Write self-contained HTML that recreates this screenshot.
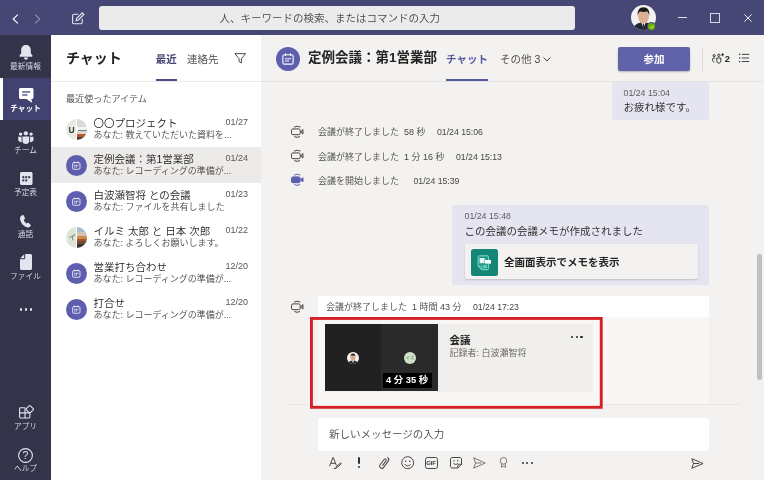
<!DOCTYPE html>
<html lang="ja">
<head>
<meta charset="utf-8">
<title>Microsoft Teams</title>
<style>
*{box-sizing:border-box;margin:0;padding:0}
html,body{width:764px;height:480px;overflow:hidden;background:#f3f2f1}
body{font-family:"Liberation Sans","Noto Sans CJK JP",sans-serif;color:#252423;position:relative;font-size:12px;font-weight:350}
.abs{position:absolute}
#titlebar,#rail,#list,#main{will-change:transform}
.nw{white-space:nowrap}
svg{display:block;overflow:visible}
/* title bar */
#titlebar{left:0;top:0;width:764px;height:35px;background:#464775}
#search{left:99px;top:6px;width:476px;height:24px;background:#ebebeb;border-radius:3px;color:#484644;font-size:10.5px;line-height:24px;text-align:left;padding-left:120.5px}
/* rail */
#rail{left:0;top:36px;width:51px;height:444px;background:#33344a;box-shadow:0 -1px 0 #33344a}
.ri{left:0;width:51px;height:42px;color:#d9d9e3;text-align:center}
.ri .lb{position:absolute;left:0;width:51px;top:25.5px;font-size:7.7px;line-height:10px;color:#dedee8;white-space:nowrap}
.ri svg{position:absolute}
#ri-chat{background:#414270}
#ri-chat:before{content:"";position:absolute;left:0;top:0;width:3px;height:42px;background:#fff}
/* list */
#list{z-index:2;left:51px;top:36px;width:210px;height:444px;background:#fff;box-shadow:0 -1px 0 #fff}
.li{left:0;width:210px;height:36px}
.li.sel{background:#edebe9}
.li .av{position:absolute;left:15.2px;top:8px;width:21px;height:21px;border-radius:50%;background:#5d5fae;overflow:hidden}
.li .t{position:absolute;left:42.5px;top:5.2px;font-size:10.5px;line-height:15px;color:#252423;white-space:nowrap}
.li .s{position:absolute;left:42.5px;top:18px;font-size:9px;line-height:13px;color:#484644;white-space:nowrap}
.li .d{position:absolute;right:13px;top:5px;font-size:9px;line-height:12px;color:#5a5856}
/* main */
#main{left:260px;top:36px;width:504px;height:444px;background:#f3f2f1}
.sys{font-size:9px;line-height:12px;color:#484644;white-space:nowrap}
.st{font-size:8.7px}
.bub{background:#e5e5f1;border-radius:2px}
.ts{font-size:8.8px;line-height:10px;color:#605e5c;white-space:nowrap}
.msg{font-size:10.5px;line-height:14px;color:#252423;white-space:nowrap}
</style>
</head>
<body>
<div id="titlebar" class="abs">
  <svg class="abs" style="left:11.500px;top:13.500px" width="7" height="10" viewBox="0 0 7 10"><path d="M5.800.6L1.200 5l4.600 4.400" fill="none" stroke="#fff" stroke-width="1.150"/></svg>
  <svg class="abs" style="left:33.500px;top:13.500px" width="7" height="10" viewBox="0 0 7 10"><path d="M1.200.6L5.800 5 1.200 9.400" fill="none" stroke="#8f90b3" stroke-width="1.150"/></svg>
  <svg class="abs" style="left:72px;top:12px" width="13" height="12.500" viewBox="0 0 13 12.500"><g fill="none" stroke="#e6e6f0" stroke-width="1.100"><path d="M6.200 2.200H2c-.8 0-1.400.6-1.400 1.400v6.800c0 .8.600 1.400 1.400 1.400h6.800c.8 0 1.400-.6 1.400-1.400V6.800"/><path d="M10.300.8l1.600 1.600-5.600 5.600-2.200.6.600-2.200z"/></g></svg>
  <div id="search" class="abs nw">人、キーワードの検索、またはコマンドの入力</div>
  <!-- user avatar -->
  <svg class="abs" style="left:631px;top:5px" width="25" height="25" viewBox="0 0 25 25"><defs><clipPath id="avc"><circle cx="12.500" cy="12.500" r="12.500"/></clipPath></defs><g clip-path="url(#avc)"><rect width="25" height="25" fill="#f4f2f1"/><path d="M2.500 25c0-5 3.500-7.500 10-7.500s10 2.500 10 7.500z" fill="#23262f"/><path d="M10.300 17.500l2.200 5.500 2.200-5.500z" fill="#eef0f4"/><path d="M12 18.500h1l.5 6.500h-2z" fill="#2c3350"/><ellipse cx="12.500" cy="11.800" rx="5.400" ry="6.500" fill="#dcae92"/><path d="M6.800 11c-.8-5.500 1.700-8.700 5.700-8.700s6.500 3.200 5.700 8.700c-.4-2.600-1.300-3.900-2.200-4.400-2.200.6-4.800.6-7 0-.9.500-1.800 1.800-2.200 4.400z" fill="#1c1a1a"/></g></svg>
  <div class="abs" style="left:647px;top:22.300px;width:9px;height:9px;border-radius:50%;background:#464775"></div>
  <div class="abs" style="left:648px;top:23.300px;width:7px;height:7px;border-radius:50%;background:#6bb700"></div>
  <svg class="abs" style="left:649.500px;top:25px" width="4" height="4" viewBox="0 0 4 4"><path d="M.5 2.100l1 1L3.500.9" fill="none" stroke="#fff" stroke-width=".8"/></svg>
  <!-- window controls -->
  <div class="abs" style="left:677.500px;top:17px;width:9.500px;height:1px;background:#e0e0ec"></div>
  <div class="abs" style="left:710px;top:13px;width:10px;height:10px;border:1px solid #d6d6e6"></div>
  <svg class="abs" style="left:744px;top:14px" width="8" height="8" viewBox="0 0 8 8"><path d="M.3.300l7.400 7.400M7.700.3L.3 7.700" fill="none" stroke="#e6e6f0" stroke-width="1"/></svg>
</div>
<div id="rail" class="abs">
  <div class="ri abs" style="top:0">
    <svg style="left:19px;top:8.600px" width="14" height="15" viewBox="0 0 14 15"><path fill="#e4e4ee" d="M7 0C4.1 0 2.2 2.1 2.2 5v3.2L.6 10.6c-.3.5 0 1.1.6 1.1h11.6c.6 0 .9-.6.6-1.1l-1.6-2.4V5C11.800 2.100 9.900 0 7 0z"/><path fill="#e4e4ee" d="M4.900 12.600h4.200c0 1.200-.9 2.200-2.100 2.200s-2.100-1-2.100-2.200z"/></svg>
    <div class="lb">最新情報</div></div>
  <div class="ri abs" id="ri-chat" style="top:42px">
    <svg style="left:18.500px;top:9.500px" width="14.500" height="14.500" viewBox="0 0 14.500 14.500"><path fill="#fff" d="M1.500 0h11.500c.8 0 1.500.7 1.500 1.500v8c0 .8-.7 1.500-1.500 1.500H12.300l.9 3.200c.1.300-.2.500-.5.300L7.400 11H1.500C.7 11 0 10.300 0 9.500v-8C0 .7.700 0 1.500 0z"/><rect x="3.200" y="3.300" width="8" height="1.300" fill="#464775"/><rect x="3.200" y="6.300" width="5.200" height="1.300" fill="#464775"/></svg>
    <div class="lb" style="color:#fff;font-weight:bold">チャット</div></div>
  <div class="ri abs" style="top:84px">
    <svg style="left:17.800px;top:10.500px" width="15.700" height="13" viewBox="0 0 15.700 13"><g fill="#e4e4ee"><circle cx="7.850" cy="2.300" r="2.100"/><circle cx="2.600" cy="3.100" r="1.700"/><circle cx="13.100" cy="3.100" r="1.700"/><path d="M4.500 5.400h6.700v4.600c0 1.700-1.500 3-3.350 3S4.500 11.700 4.500 10z"/><path d="M.2 5.700h3.400v5.600C1.700 11.300.2 10.200.2 8.500z"/><path d="M12.100 5.700h3.400v2.800c0 1.700-1.500 2.800-3.400 2.800z"/></g></svg>
    <div class="lb">チーム</div></div>
  <div class="ri abs" style="top:126px">
    <svg style="left:19.500px;top:10.400px" width="12.500" height="13" viewBox="0 0 12.500 13"><path fill="#e4e4ee" d="M1.500 0h9.500c.8 0 1.500.7 1.500 1.500v10c0 .8-.7 1.500-1.500 1.500H1.500C.7 13 0 12.300 0 11.500v-10C0 .7.700 0 1.500 0z"/><g fill="#33344a"><rect x="2.300" y="4.200" width="2" height="2"/><rect x="5.250" y="4.200" width="2" height="2"/><rect x="8.200" y="4.200" width="2" height="2"/><rect x="2.300" y="7.400" width="2" height="2"/><rect x="5.250" y="7.400" width="2" height="2"/></g></svg>
    <div class="lb">予定表</div></div>
  <div class="ri abs" style="top:168px">
    <svg style="left:20.200px;top:11px" width="11" height="12.500" viewBox="0 0 11 12.500"><path fill="#e4e4ee" d="M2.700.1c.4-.2.900 0 1.100.4l1.100 2.400c.2.400.1.800-.2 1.100l-.9.900c.4 1.300 1.400 2.600 2.800 3.500l1.100-.6c.4-.2.800-.1 1.100.2l1.800 1.900c.3.300.3.800.1 1.100-.7 1-1.800 1.600-3.100 1.400C3.600 11.800.100 7.500 0 3.300 0 1.900 1.300.6 2.700.1z"/></svg>
    <div class="lb">通話</div></div>
  <div class="ri abs" style="top:210px">
    <svg style="left:20.200px;top:8px" width="12" height="16" viewBox="0 0 12 16"><path fill="#e4e4ee" d="M5.200 0H10.500c.8 0 1.500.7 1.500 1.500v13c0 .8-.7 1.500-1.500 1.500h-9C.7 16 0 15.300 0 14.500V5.200h3.700c.8 0 1.500-.7 1.500-1.500z"/><path fill="#e4e4ee" d="M4.200.3v3.200c0 .4-.3.700-.7.700H.3z"/></svg>
    <div class="lb">ファイル</div></div>
  <div class="abs" style="left:19.700px;top:272.300px;width:2.600px;height:2.600px;border-radius:50%;background:#e4e4ee"></div>
  <div class="abs" style="left:24.700px;top:272.300px;width:2.600px;height:2.600px;border-radius:50%;background:#e4e4ee"></div>
  <div class="abs" style="left:29.700px;top:272.300px;width:2.600px;height:2.600px;border-radius:50%;background:#e4e4ee"></div>
  <div class="ri abs" style="top:360px">
    <svg style="left:18.600px;top:9.300px" width="15" height="13.600" viewBox="0 0 15 13.600"><g fill="none" stroke="#e4e4ee" stroke-width="1.100"><path d="M6 2.700H1.500c-.5 0-.9.400-.9.900v8.500c0 .5.400.9.900.9H10c.5 0 .9-.4.900-.9V8"/><path d="M6 2.700V13M.6 7.900h10.300"/><path d="M11.300.8l2.900 2.900c.3.300.3.800 0 1.100L11.300 7.700c-.3.300-.8.300-1.100 0L7.300 4.800c-.3-.3-.3-.8 0-1.100L10.200.8c.3-.3.800-.3 1.100 0z"/></g></svg>
    <div class="lb" style="top:26px">アプリ</div></div>
  <div class="ri abs" style="top:401.500px">
    <svg style="left:18.300px;top:10.500px" width="15" height="15" viewBox="0 0 15 15"><circle cx="7.500" cy="7.500" r="6.900" fill="none" stroke="#e4e4ee" stroke-width="1.100"/><text x="7.500" y="11.200" text-anchor="middle" font-family="Liberation Sans,sans-serif" font-size="10.500" fill="#e4e4ee">?</text></svg>
    <div class="lb" style="top:26.500px">ヘルプ</div></div>
</div>
<div id="list" class="abs">
  <div class="abs nw" style="left:15px;top:12px;font-size:14px;line-height:20px;font-weight:bold;color:#252423">チャット</div>
  <div class="abs nw" style="left:104.800px;top:16px;font-size:10.500px;line-height:14px;color:#464775;font-weight:bold">最近</div>
  <div class="abs" style="left:105px;top:43px;width:21px;height:2px;background:#4b4d85"></div>
  <div class="abs nw" style="left:136px;top:16px;font-size:10.500px;line-height:14px;color:#484644">連絡先</div>
  <svg class="abs" style="left:183.200px;top:17.200px" width="12.500" height="11.200" viewBox="0 0 13 11.500"><path d="M.9.600h11.200L7.700 5.900v4.500L5.300 8.800V5.900z" fill="none" stroke="#484644" stroke-width="1" stroke-linejoin="round"/></svg>
  <div class="abs" style="left:0;top:45px;width:210px;height:1px;background:#edebe9"></div>
  <div class="abs nw" style="left:15px;top:57px;font-size:9.100px;line-height:12px;color:#484644">最近使ったアイテム</div>

  <div class="li abs" style="top:74.8px"><div class="av" style="background:#e6eae3"><div class="abs" style="left:10.500px;top:0;width:10.500px;height:21px;background:#d7dbd8"></div><div class="abs" style="left:10.500px;top:8.500px;width:10.500px;height:3.500px;background:#f4f4f2"></div><div class="abs" style="left:12px;top:11px;width:9px;height:1.200px;background:#5f7fa6"></div><div class="abs" style="left:10.500px;top:12.500px;width:10.500px;height:3px;background:#e6d6c8"></div><div class="abs" style="left:10.500px;top:15.500px;width:10.500px;height:3px;background:#b25a30"></div><div class="abs" style="left:10.500px;top:18.500px;width:10.500px;height:2.500px;background:#4a3a34"></div><div class="abs" style="left:10.200px;top:0;width:.8px;height:21px;background:#fff"></div><div class="abs nw" style="left:2.200px;top:6.200px;font-size:8.500px;line-height:10px;font-weight:bold;color:#3b3a39">U</div></div><div class="t">〇〇プロジェクト</div><div class="s">あなた: 教えていただいた資料を...</div><div class="d">01/27</div></div>
  <div class="li abs sel" style="top:110.8px"><div class="av"><svg style="position:absolute;left:6.200px;top:6.300px" width="8.600" height="9.200" viewBox="0 0 11 11"><g fill="none" stroke="#fff" stroke-width="1"><rect x=".8" y="1.600" width="9.400" height="8.600" rx="1.600"/><path d="M3.300.3v2.400M7.700.3v2.400"/></g><g fill="#fff"><rect x="3" y="4.500" width="1.300" height="1.300"/><rect x="4.900" y="4.500" width="1.300" height="1.300"/><rect x="6.800" y="4.500" width="1.300" height="1.300"/><rect x="3" y="6.600" width="1.300" height="1.300"/><rect x="4.900" y="6.600" width="1.300" height="1.300"/></g></svg></div><div class="t">定例会議：第1営業部</div><div class="s">あなた: レコーディングの準備が...</div><div class="d">01/24</div></div>
  <div class="li abs" style="top:146.8px"><div class="av"><svg style="position:absolute;left:6.200px;top:6.300px" width="8.600" height="9.200" viewBox="0 0 11 11"><g fill="none" stroke="#fff" stroke-width="1"><rect x=".8" y="1.600" width="9.400" height="8.600" rx="1.600"/><path d="M3.300.3v2.400M7.700.3v2.400"/></g><g fill="#fff"><rect x="3" y="4.500" width="1.300" height="1.300"/><rect x="4.900" y="4.500" width="1.300" height="1.300"/><rect x="6.800" y="4.500" width="1.300" height="1.300"/><rect x="3" y="6.600" width="1.300" height="1.300"/><rect x="4.900" y="6.600" width="1.300" height="1.300"/></g></svg></div><div class="t">白波瀬智将 との会議</div><div class="s">あなた: ファイルを共有しました</div><div class="d">01/23</div></div>
  <div class="li abs" style="top:182.8px"><div class="av" style="background:#dde4da"><div class="abs" style="left:10.500px;top:0;width:10.500px;height:21px;background:#a9b9c9"></div><div class="abs" style="left:10.500px;top:5px;width:10.500px;height:4px;background:#d2c4b4"></div><div class="abs" style="left:10.500px;top:9px;width:10.500px;height:3.500px;background:#d08a4a"></div><div class="abs" style="left:10.500px;top:12.500px;width:10.500px;height:2px;background:#a4552c"></div><div class="abs" style="left:10.500px;top:14.500px;width:10.500px;height:3px;background:#6e4a38"></div><div class="abs" style="left:10.500px;top:17.500px;width:10.500px;height:3.500px;background:#3f3432"></div><div class="abs" style="left:10.200px;top:0;width:.8px;height:21px;background:#fff"></div><div class="abs nw" style="left:2.300px;top:6px;font-size:7.800px;line-height:10px;color:#5a6658">イ</div></div><div class="t">イルミ 太郎 と 日本 次郎</div><div class="s">あなた: よろしくお願いします。</div><div class="d">01/22</div></div>
  <div class="li abs" style="top:218.8px"><div class="av"><svg style="position:absolute;left:6.200px;top:6.300px" width="8.600" height="9.200" viewBox="0 0 11 11"><g fill="none" stroke="#fff" stroke-width="1"><rect x=".8" y="1.600" width="9.400" height="8.600" rx="1.600"/><path d="M3.300.3v2.400M7.700.3v2.400"/></g><g fill="#fff"><rect x="3" y="4.500" width="1.300" height="1.300"/><rect x="4.900" y="4.500" width="1.300" height="1.300"/><rect x="6.800" y="4.500" width="1.300" height="1.300"/><rect x="3" y="6.600" width="1.300" height="1.300"/><rect x="4.900" y="6.600" width="1.300" height="1.300"/></g></svg></div><div class="t">営業打ち合わせ</div><div class="s">あなた: レコーディングの準備が...</div><div class="d">12/20</div></div>
  <div class="li abs" style="top:254.8px"><div class="av"><svg style="position:absolute;left:6.200px;top:6.300px" width="8.600" height="9.200" viewBox="0 0 11 11"><g fill="none" stroke="#fff" stroke-width="1"><rect x=".8" y="1.600" width="9.400" height="8.600" rx="1.600"/><path d="M3.300.3v2.400M7.700.3v2.400"/></g><g fill="#fff"><rect x="3" y="4.500" width="1.300" height="1.300"/><rect x="4.900" y="4.500" width="1.300" height="1.300"/><rect x="6.800" y="4.500" width="1.300" height="1.300"/><rect x="3" y="6.600" width="1.300" height="1.300"/><rect x="4.900" y="6.600" width="1.300" height="1.300"/></g></svg></div><div class="t">打合せ</div><div class="s">あなた: レコーディングの準備が...</div><div class="d">12/20</div></div>
</div>
<div id="main" class="abs">
  <!-- header -->
  <div class="abs" style="left:16px;top:10.5px;width:24px;height:24px;border-radius:50%;background:#5d5fae"></div>
  <div class="abs nw" style="left:48px;top:12px;font-size:13.5px;line-height:20px;font-weight:bold;color:#252423">定例会議：第1営業部</div>
  <div class="abs nw" style="left:186px;top:16px;font-size:10.5px;line-height:14px;font-weight:bold;color:#5558a0">チャット</div>
  <div class="abs" style="left:186px;top:42.500px;width:42px;height:2.300px;background:#565aa0"></div>
  <div class="abs nw" style="left:240px;top:16px;font-size:10.5px;line-height:14px;color:#484644">その他 3</div>
  <div class="abs" style="left:0;top:45px;width:504px;height:1px;background:#e6e4e2"></div>
  <div class="abs nw" style="left:358px;top:11px;width:72px;height:24px;background:#6063a9;border-radius:2px;color:#fff;font-weight:bold;font-size:10.5px;line-height:24px;text-align:center;box-shadow:0 1px 2px rgba(0,0,0,.25)">参加</div>
  <div class="abs" style="left:442px;top:11px;width:1px;height:24px;background:#dcdad8"></div>
  <div class="abs nw" style="left:464.700px;top:18.200px;font-size:9.300px;line-height:10px;font-weight:bold;color:#252423">2</div>

  <!-- first bubble -->
  <div class="abs bub" style="left:352px;top:46px;width:97px;height:38px"></div>
  <div class="abs ts" style="left:363.5px;top:52px">01/24 15:04</div>
  <div class="abs msg" style="left:363.5px;top:64px">お疲れ様です。</div>

  <!-- system rows -->
  <div class="abs sys" style="left:58px;top:90px">会議が終了しました&nbsp; 58 秒<span class="st" style="margin-left:11.500px">01/24 15:06</span></div>
  <div class="abs sys" style="left:58px;top:115px">会議が終了しました&nbsp; 1 分 16 秒<span class="st" style="margin-left:11.500px">01/24 15:13</span></div>
  <div class="abs sys" style="left:58px;top:139px">会議を開始しました<span class="st" style="margin-left:14.500px">01/24 15:39</span></div>

  <!-- memo bubble -->
  <div class="abs bub" style="left:192px;top:169px;width:257px;height:80px"></div>
  <div class="abs ts" style="left:204.5px;top:175px">01/24 15:48</div>
  <div class="abs msg" style="left:204.5px;top:188px">この会議の会議メモが作成されました</div>
  <div class="abs" style="left:204.5px;top:208px;width:233px;height:35px;background:#f3f2f1;border-radius:2px;box-shadow:0 1px 2px rgba(0,0,0,.18)"></div>
  <div class="abs" style="left:210.7px;top:212.600px;width:27px;height:27px;background:#158676;border-radius:2.500px"></div>
  <div class="abs msg" style="left:244px;top:219.300px;font-weight:bold">全画面表示でメモを表示</div>

  <!-- recording row -->
  <div class="abs" style="left:58px;top:260px;width:391px;height:21px;background:#fff"></div>
  <div class="abs" style="left:58px;top:281px;width:391px;height:87.500px;background:#f8f7f6"></div>
  <div class="abs sys" style="left:66px;top:265px">会議が終了しました&nbsp; 1 時間 43 分<span class="st" style="margin-left:11.500px">01/24 17:23</span></div>
  <div class="abs" style="left:65px;top:288px;width:268px;height:67.5px;background:#f0efed"></div>
  <div class="abs" style="left:65px;top:288.2px;width:113px;height:67.2px;background:#212121"></div>
  <div class="abs" style="left:121px;top:288.2px;width:57px;height:67.2px;background:#2a2a2a"></div>
  <svg class="abs" style="left:87.2px;top:316px" width="12" height="12" viewBox="0 0 25 25"><defs><clipPath id="avc2"><circle cx="12.5" cy="12.5" r="12.5"/></clipPath></defs><g clip-path="url(#avc2)"><rect width="25" height="25" fill="#f4f2f1"/><path d="M2.500 25c0-5 3.500-7.500 10-7.500s10 2.500 10 7.500z" fill="#23262f"/><path d="M10.300 17.500l2.200 5.500 2.200-5.500z" fill="#eef0f4"/><ellipse cx="12.500" cy="11.500" rx="5" ry="6.200" fill="#d9a789"/><path d="M7.300 10.500c-.6-4.800 1.700-7.300 5.200-7.300s5.800 2.500 5.200 7.300c-.4-2.300-1.300-3.400-2.100-3.800-2 .5-4.200.5-6.200 0-.8.400-1.700 1.500-2.100 3.800z" fill="#1c1a1a"/></g></svg>
  <div class="abs nw" style="left:143.800px;top:315.800px;width:12.400px;height:12.400px;border-radius:50%;background:#d3e0c8;font-size:4.500px;line-height:12.400px;text-align:center;color:#5c8a4e">イネ</div>
  <div class="abs nw" style="left:122.5px;top:337.3px;width:49.3px;height:14.3px;background:#000;color:#fff;font-weight:bold;font-size:9.4px;line-height:14.3px;text-align:center;letter-spacing:0">4 分 35 秒</div>
  <div class="abs nw" style="left:189.5px;top:296.800px;font-size:10.5px;line-height:14px;font-weight:bold;color:#252423">会議</div>
  <div class="abs nw" style="left:189.5px;top:311px;font-size:9px;line-height:12px;color:#605e5c">記録者: 白波瀬智将</div>
  <div class="abs" style="left:311.2px;top:299.6px;width:2.2px;height:2.2px;border-radius:50%;background:#252423"></div><div class="abs" style="left:315.8px;top:299.6px;width:2.2px;height:2.2px;border-radius:50%;background:#252423"></div><div class="abs" style="left:320.4px;top:299.6px;width:2.2px;height:2.2px;border-radius:50%;background:#252423"></div>
  <!-- red highlight -->
  

  <div class="abs" style="left:28px;top:368px;width:23px;height:1px;background:#e9e7e5"></div><div class="abs" style="left:342px;top:368px;width:139px;height:1px;background:#e9e7e5"></div><div class="abs" style="left:58px;top:368px;width:283px;height:3px;background:#f8f7f6"></div>
  <svg class="abs" style="left:50.400px;top:281px" width="292.700" height="91.750" viewBox="0 0 292.700 91.750"><rect x="1.450" y="1.450" width="289.800" height="88.850" fill="none" stroke="#d52027" stroke-width="2.900"/></svg>
  <!-- compose -->
  <div class="abs" style="left:58px;top:382px;width:391px;height:32.5px;background:#fff;border-radius:2px"></div>
  <div class="abs msg" style="left:69px;top:391px;color:#484644">新しいメッセージの入力</div>


  <!-- header icons -->
  <svg class="abs" style="left:22px;top:16.500px" width="12" height="12" viewBox="0 0 11 11"><g fill="none" stroke="#fff" stroke-width="1"><rect x=".8" y="1.600" width="9.400" height="8.600" rx="1.600"/><path d="M3.300.3v2.400M7.700.3v2.400"/></g><g fill="#fff"><rect x="3" y="4.500" width="1.300" height="1.300"/><rect x="4.900" y="4.500" width="1.300" height="1.300"/><rect x="6.800" y="4.500" width="1.300" height="1.300"/><rect x="3" y="6.600" width="1.300" height="1.300"/><rect x="4.900" y="6.600" width="1.300" height="1.300"/></g></svg>
  <svg class="abs" style="left:283px;top:21px" width="8" height="5" viewBox="0 0 8 5"><path d="M.5.500L4 4 7.500.5" fill="none" stroke="#484644" stroke-width="1"/></svg>
  <svg class="abs" style="left:451.500px;top:17px" width="13" height="11" viewBox="0 0 13 11"><g fill="none" stroke="#252423" stroke-width=".9"><circle cx="2.100" cy="2.700" r="1.100"/><circle cx="6.800" cy="2.300" r="1.200"/><path d="M3.300 5.200H1.300c-.4 0-.7.300-.7.700v1.300c0 1 .7 1.700 1.700 1.800"/><path d="M4.800 5h4v3.200c0 1.100-.9 1.900-2 1.900s-2-.8-2-1.900z"/><path d="M10.600.2v3M9.100 1.700h3"/></g></svg>
  <svg class="abs" style="left:478.500px;top:16.800px" width="10.400" height="9.500" viewBox="0 0 11 10"><g fill="#252423"><rect x="0" y=".7" width="1.300" height="1.300"/><rect x="0" y="4.600" width="1.300" height="1.300"/><rect x="0" y="8.400" width="1.300" height="1.300"/><rect x="3" y=".9" width="7.800" height=".9"/><rect x="3" y="4.800" width="7.800" height=".9"/><rect x="3" y="8.600" width="7.800" height=".9"/></g></svg>
  <!-- video icons -->
  <svg class="abs" style="left:31px;top:89.3px" width="13" height="14" viewBox="0 0 13 14"><rect x=".5" y="3.900" width="8.700" height="5.800" rx="1.500" fill="none" stroke="#484644" stroke-width="1"/><path d="M9.500 6.800L12 4.500v4.600z" fill="#a19f9d" stroke="#484644" stroke-width=".9" stroke-linejoin="round"/><path d="M3.100 2.100Q6.250.4 9.400 2.100M3.400 11.500Q6.200 13.200 9 11.500" fill="none" stroke="#484644" stroke-width="1"/></svg>
  <svg class="abs" style="left:31px;top:112.8px" width="13" height="14" viewBox="0 0 13 14"><rect x=".5" y="3.900" width="8.700" height="5.800" rx="1.500" fill="none" stroke="#484644" stroke-width="1"/><path d="M9.500 6.800L12 4.500v4.600z" fill="#a19f9d" stroke="#484644" stroke-width=".9" stroke-linejoin="round"/><path d="M3.100 2.100Q6.250.4 9.400 2.100M3.400 11.500Q6.200 13.200 9 11.500" fill="none" stroke="#484644" stroke-width="1"/></svg>
  <svg class="abs" style="left:31px;top:137.0px" width="13" height="14" viewBox="0 0 13 14"><rect x=".5" y="3.900" width="8.700" height="5.800" rx="1.500" fill="#5d5fae" stroke="#5d5fae" stroke-width="1"/><path d="M9.900 6.500L12 4.700v4.200L9.900 7.100z" fill="#5d5fae" stroke="#5d5fae" stroke-width="1" stroke-linejoin="round"/><path d="M3.100 2.100Q6.250.4 9.400 2.100M3.400 11.500Q6.200 13.200 9 11.500" fill="none" stroke="#5d5fae" stroke-width="1"/></svg>
  <svg class="abs" style="left:31px;top:264.0px" width="13" height="14" viewBox="0 0 13 14"><rect x=".5" y="3.900" width="8.700" height="5.800" rx="1.500" fill="none" stroke="#484644" stroke-width="1"/><path d="M9.500 6.800L12 4.500v4.600z" fill="#a19f9d" stroke="#484644" stroke-width=".9" stroke-linejoin="round"/><path d="M3.100 2.100Q6.250.4 9.400 2.100M3.400 11.500Q6.200 13.200 9 11.500" fill="none" stroke="#484644" stroke-width="1"/></svg>
  <!-- memo icon -->
  <svg class="abs" style="left:217px;top:218.600px" width="15" height="16" viewBox="0 0 15 16"><path d="M2.500.8h7.700c.8 0 1.400.6 1.400 1.400v11.200c0 .8-.6 1.400-1.400 1.400H4.800L1.100 11.300V2.200c0-.8.600-1.400 1.400-1.400z" fill="#1d9b8a" stroke="#8be3d3" stroke-width=".9"/><path d="M1.100 11.300h2.500c.7 0 1.200.5 1.200 1.200v2.300" fill="none" stroke="#8be3d3" stroke-width=".9"/><rect x="2.600" y="3" width="5" height="5.200" fill="#e6f7f3"/><rect x="8" y="5" width="6" height="3.600" fill="#fff"/><rect x="6" y="9.800" width="4" height="3.500" fill="#5cc9b6"/></svg>
  <!-- compose toolbar -->
  <svg class="abs" style="left:69px;top:421px" width="13" height="12" viewBox="0 0 13 12"><g fill="none" stroke="#484644" stroke-width="1"><path d="M.6 9.300L3.900.6h.4l3.100 8"/><path d="M1.800 6.300h4.400"/><path d="M11.800 5.800l.6.600-3.800 3.800-1.800.9.900-1.800z"/><path d="M4.800 11.300c1 .4 1.700.3 2.300-.2"/></g></svg>
  <div class="abs" style="left:97.800px;top:421.200px;width:2px;height:6.800px;background:#323130;border-radius:1px"></div>
  <div class="abs" style="left:97.700px;top:429.600px;width:2.200px;height:2.200px;background:#323130;border-radius:50%"></div>
  <svg class="abs" style="left:117.500px;top:420.500px" width="12" height="12" viewBox="0 0 12 12"><path d="M4.300 8.200l4-4c.5-.5.500-1.200 0-1.700s-1.200-.5-1.700 0L1.900 7.200c-.9.900-.9 2.200 0 3.100s2.200.9 3.100 0l5.300-5.300c1.200-1.200 1.200-2.800.1-3.900" fill="none" stroke="#484644" stroke-width="1" stroke-linecap="round" transform="rotate(-8 6 6)"/></svg>
  <svg class="abs" style="left:140.500px;top:419.800px" width="13.400" height="13.400" viewBox="0 0 13.400 13.400"><circle cx="6.700" cy="6.700" r="6" fill="none" stroke="#484644" stroke-width="1"/><circle cx="4.600" cy="5.200" r=".8" fill="#484644"/><circle cx="8.800" cy="5.200" r=".8" fill="#484644"/><path d="M3.800 8.200c.8 1.200 1.800 1.700 2.900 1.700s2.100-.5 2.900-1.700" fill="none" stroke="#484644" stroke-width="1"/></svg>
  <div class="abs nw" style="left:164.500px;top:420.500px;width:13px;height:12px;border:1px solid #484644;border-radius:2.500px;font-size:6px;line-height:10px;font-weight:bold;color:#3b3a39;text-align:center;letter-spacing:-.1px">GIF</div>
  <svg class="abs" style="left:189.500px;top:420.800px" width="12" height="11.500" viewBox="0 0 12 11.500"><path d="M2 .5h8c.8 0 1.500.7 1.500 1.500v5.300L7.800 11H2C1.200 11 .5 10.300.5 9.500V2C.5 1.200 1.200.5 2 .5z" fill="none" stroke="#484644" stroke-width="1"/><path d="M11.500 7.300H9.200c-.8 0-1.400.6-1.400 1.400V11" fill="none" stroke="#484644" stroke-width="1"/><circle cx="4" cy="3.800" r=".7" fill="#484644"/><circle cx="7.700" cy="3.800" r=".7" fill="#484644"/><path d="M3.300 6c.7 1 1.500 1.400 2.500 1.400S7.600 7 8.300 6" fill="none" stroke="#484644" stroke-width="1"/></svg>
  <svg class="abs" style="left:213px;top:420.500px" width="13" height="12" viewBox="0 0 13 12"><path d="M.7.800l11.500 5.200L.7 11.200l1.800-5.200zM2.500 6h6" fill="none" stroke="#7a7876" stroke-width="1" stroke-linejoin="round"/></svg>
  <svg class="abs" style="left:239.200px;top:421.200px" width="9" height="11" viewBox="0 0 9 11"><circle cx="4.500" cy="3.900" r="3.300" fill="none" stroke="#7a7876" stroke-width="1"/><path d="M2.600 6.800v3.500l1.900-1.200 1.900 1.200V6.800" fill="none" stroke="#7a7876" stroke-width="1"/></svg>
  <div class="abs" style="left:261.600px;top:425.500px;width:2.300px;height:2.300px;border-radius:50%;background:#323130"></div>
  <div class="abs" style="left:266.200px;top:425.500px;width:2.300px;height:2.300px;border-radius:50%;background:#323130"></div>
  <div class="abs" style="left:270.800px;top:425.500px;width:2.300px;height:2.300px;border-radius:50%;background:#323130"></div>
  <svg class="abs" style="left:431px;top:421.500px" width="13" height="11" viewBox="0 0 13 11"><path d="M.8.700l11.300 4.800L.8 10.300l1.700-4.800zM2.500 5.500h5.800" fill="none" stroke="#484644" stroke-width="1" stroke-linejoin="round"/></svg>
  <!-- scrollbar -->
  <div class="abs" style="left:497.400px;top:218px;width:4.500px;height:125.500px;background:#c2c0be;border-radius:2.250px"></div>
</div>
</body>
</html>
